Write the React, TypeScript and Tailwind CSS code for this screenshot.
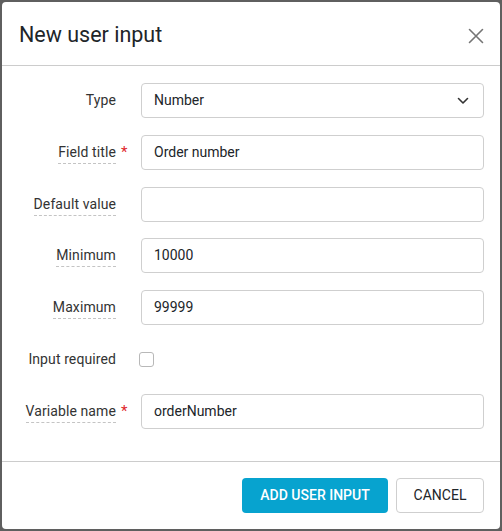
import React from "react";

const font = { fontFamily: "Roboto, 'Liberation Sans', sans-serif" };

function Label({ text, dashed = true, required = false }: { text: string; dashed?: boolean; required?: boolean }) {
  return (
    <div className="flex w-[139px] shrink-0 items-center justify-end">
      <span
        className={
          "text-[14px] leading-[17px] tracking-[0.1px] text-[#333333] " +
          (dashed ? "border-b border-dashed border-[#c4c4c4] pb-[2px] mt-[3px]" : "")
        }
      >
        {text}
      </span>
      <span className="w-[25px] pl-[5px] text-[15px] leading-none text-[#e0262b]">{required ? "*" : ""}</span>
    </div>
  );
}

function TextRow({ label, value, required = false, dashed = true }: { label: string; value: string; required?: boolean; dashed?: boolean }) {
  return (
    <div className="flex items-center">
      <Label text={label} required={required} dashed={dashed} />
      <div className="flex h-[35px] flex-1 items-center rounded-[4px] border border-[#cfcfcf] px-[12px] text-[14px] text-[#212529]">
        {value}
      </div>
    </div>
  );
}

export default function App() {
  return (
    <div className="h-[531px] w-[502px] bg-[#5f5f5f] p-[2px]" style={font}>
      <div className="flex h-full w-full flex-col rounded-[4px] bg-white">
        <div className="flex h-[64px] items-center justify-between border-b border-[#cccccc] pl-[17px] pr-[16px]">
          <div className="text-[21.5px] font-normal text-[#212529] mt-[4px]">New user input</div>
          <svg width="16" height="16" viewBox="0 0 16 16" className="mt-[5px]">
            <path d="M1.5 1.5 L14.5 14.5 M14.5 1.5 L1.5 14.5" stroke="#757575" strokeWidth="1.6" strokeLinecap="round" />
          </svg>
        </div>
        <div className="flex flex-col gap-[16.75px] pb-[32px] pr-[16px] pt-[17px]">
          <div className="flex items-center">
            <Label text="Type" dashed={false} />
            <div className="flex h-[35px] flex-1 items-center justify-between rounded-[4px] border border-[#cfcfcf] pl-[12px] pr-[14px] text-[14px] text-[#212529]">
              <span>Number</span>
              <svg width="12" height="8" viewBox="0 0 12 8">
                <path d="M1.5 1.5 L6 6 L10.5 1.5" stroke="#333" strokeWidth="1.6" fill="none" strokeLinecap="round" strokeLinejoin="round" />
              </svg>
            </div>
          </div>
          <TextRow label="Field title" value="Order number" required />
          <TextRow label="Default value" value="" />
          <TextRow label="Minimum" value="10000" />
          <TextRow label="Maximum" value="99999" />
          <div className="flex h-[35px] items-center">
            <Label text="Input required" dashed={false} />
            <div className="-ml-[2px] h-[15px] w-[15px] rounded-[3px] border border-[#b8b8b8] bg-white" />
          </div>
          <TextRow label="Variable name" value="orderNumber" required />
        </div>
        <div className="flex flex-1 items-center justify-end gap-[8px] border-t border-[#cccccc] pr-[16px]">
          <button className="h-[35px] w-[146px] rounded-[4px] bg-[#07a3cf] text-[14px] font-medium text-white">
            ADD USER INPUT
          </button>
          <button className="h-[35px] w-[88px] rounded-[4px] border border-[#cfcfcf] bg-white text-[14px] text-[#212529]">
            CANCEL
          </button>
        </div>
      </div>
    </div>
  );
}
